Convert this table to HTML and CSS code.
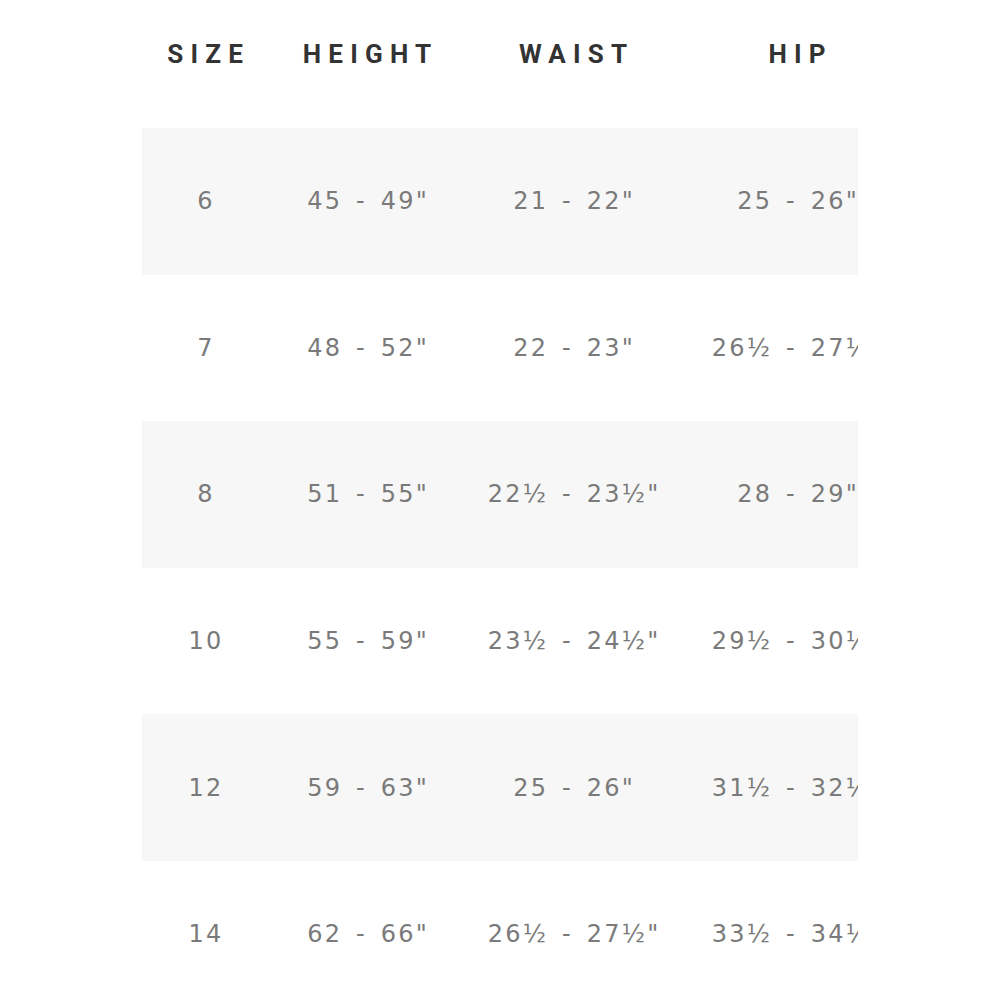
FILE: index.html
```html
<!DOCTYPE html>
<html>
<head>
<meta charset="utf-8">
<link rel="stylesheet" href="styles.css">
</head>
<body>
<div class="wrap">
  <div class="table">
    <div class="row head">
      <div class="cell">SIZE</div>
      <div class="cell">HEIGHT</div>
      <div class="cell">WAIST</div>
      <div class="cell">HIP</div>
    </div>
    <div class="row shade">
      <div class="cell">6</div>
      <div class="cell">45 - 49"</div>
      <div class="cell">21 - 22"</div>
      <div class="cell">25 - 26"</div>
    </div>
    <div class="row">
      <div class="cell">7</div>
      <div class="cell">48 - 52"</div>
      <div class="cell">22 - 23"</div>
      <div class="cell">26½ - 27½"</div>
    </div>
    <div class="row shade">
      <div class="cell">8</div>
      <div class="cell">51 - 55"</div>
      <div class="cell">22½ - 23½"</div>
      <div class="cell">28 - 29"</div>
    </div>
    <div class="row">
      <div class="cell">10</div>
      <div class="cell">55 - 59"</div>
      <div class="cell">23½ - 24½"</div>
      <div class="cell">29½ - 30½"</div>
    </div>
    <div class="row shade">
      <div class="cell">12</div>
      <div class="cell">59 - 63"</div>
      <div class="cell">25 - 26"</div>
      <div class="cell">31½ - 32½"</div>
    </div>
    <div class="row">
      <div class="cell">14</div>
      <div class="cell">62 - 66"</div>
      <div class="cell">26½ - 27½"</div>
      <div class="cell">33½ - 34½"</div>
    </div>
  </div>
</div>
</body>
</html>
```
FILE: styles.css
```css
html, body {
  margin: 0;
  padding: 0;
  background: #ffffff;
}
.wrap {
  margin-left: 142px;
  width: 716px;
  overflow: hidden;
}
.table {
  width: 772px;
}
.row {
  display: grid;
  grid-template-columns: 126px 198px 214px 234px;
  height: 146.6px;
  align-items: center;
  font-family: "DejaVu Sans", sans-serif;
  font-size: 24px;
  letter-spacing: 2.2px;
  word-spacing: 4px;
  color: #7a7a7a;
  white-space: nowrap;
}
.row.shade {
  background: #f7f7f7;
}
.row.head {
  height: 108px;
  margin-bottom: 20px;
  font-family: "Roboto", "Liberation Sans", sans-serif;
  font-weight: 700;
  font-size: 26px;
  letter-spacing: 7.2px;
  word-spacing: 0;
  color: #333333;
}
.cell {
  text-align: center;
  padding-left: 2.2px;
}
.head .cell {
  padding-left: 7.2px;
}
```
